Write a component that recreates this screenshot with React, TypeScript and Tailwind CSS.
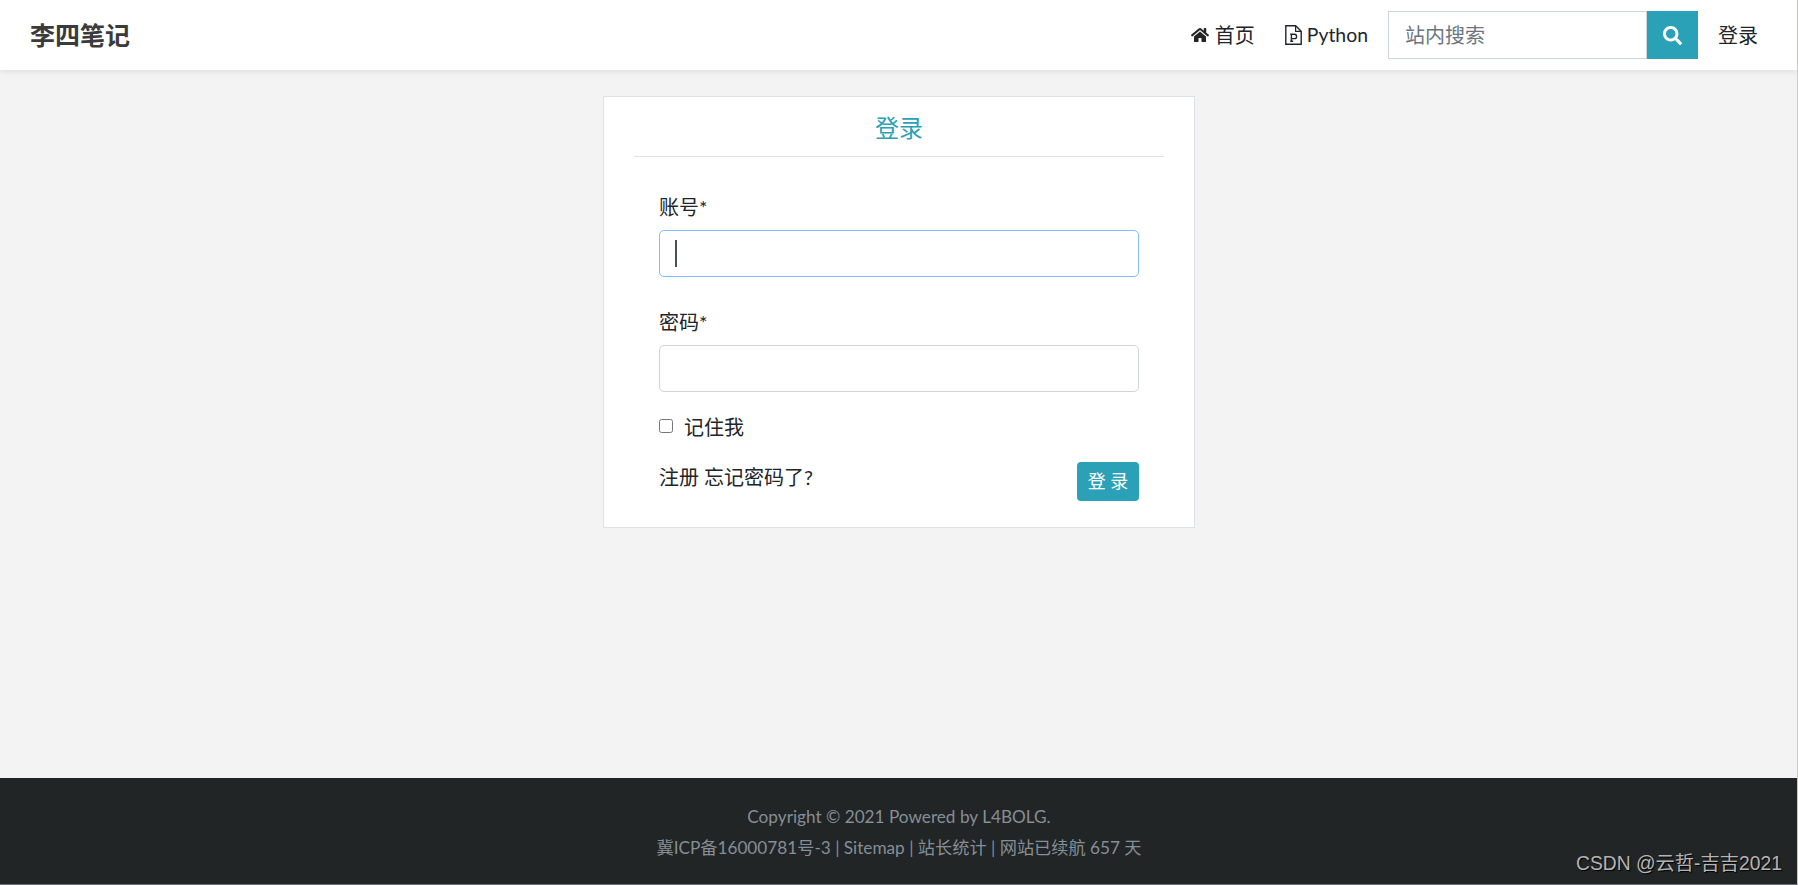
import { FaHome, FaSearch } from "react-icons/fa";

function FileP() {
  return (
    <svg viewBox="0 0 17 20" className="h-[20px] w-[17px] shrink-0" fill="none" stroke="currentColor">
      <path d="M1.5.8h9.2l5.5 5.5v12.9H.8V.8z" strokeWidth="1.4" />
      <path d="M10.6 1v5.4H16" strokeWidth="1.2" />
      <path d="M5.2 9.2h1.4M5.2 16.2h3M6.4 9.2v7M6.4 9.2h3a2 2 0 0 1 0 4.4h-3" strokeWidth="1.4" />
    </svg>
  );
}

export default function App() {
  return (
    <div className="relative flex h-[885px] flex-col overflow-hidden bg-[#f3f3f3] font-['Lato','Noto_Sans_CJK_SC',sans-serif] text-[20px] text-[#212529]">
      <header className="flex h-[70px] shrink-0 items-center justify-between bg-white pl-[30px] pr-[40px] shadow-[0_1px_6px_rgba(0,0,0,0.1)]">
        <a className="pt-[1px] text-[25px] font-bold text-[#3b3b3b]">李四笔记</a>
        <nav className="flex items-center">
          <a className="flex items-center gap-[6px]">
            <FaHome className="h-[18px] w-[18px]" />
            首页
          </a>
          <a className="ml-[30px] flex items-center gap-[5px] text-[19.4px]">
            <FileP />
            Python
          </a>
          <form className="ml-[20px] flex h-[48px] items-stretch">
            <div className="flex w-[259px] items-center border border-[#ced4da] bg-white pl-[16px] text-[#6c757d]">
              站内搜索
            </div>
            <button type="button" className="flex w-[51px] items-center justify-center bg-[#2ba1b8] text-white">
              <FaSearch className="h-[19px] w-[19px]" />
            </button>
          </form>
          <a className="ml-[20px]">登录</a>
        </nav>
      </header>

      <main className="flex-1">
        <section className="mx-auto mt-[26px] h-[432px] w-[592px] border border-[#dee2e6] bg-white px-[30px]">
          <h2 className="flex h-[60px] items-center justify-center border-b border-[#dee2e6] pt-[2px] text-[24px] text-[#2ba1b8]">
            登录
          </h2>
          <form className="px-[25px]">
            <label className="mt-[37px] block leading-[27px]">账号*</label>
            <div className="mt-[9px] flex h-[47px] items-center rounded-[5px] border border-[#80bdff] bg-white pl-[15px]">
              <span className="h-[27px] w-[2px] bg-[#495057]" />
            </div>
            <label className="mt-[32px] block leading-[27px]">密码*</label>
            <div className="mt-[9px] h-[47px] rounded-[5px] border border-[#ced4da] bg-white" />
            <div className="mt-[22px] flex items-center">
              <input type="checkbox" className="mb-[4px] h-[14px] w-[14px]" />
              <span className="ml-[11px] leading-[27px]">记住我</span>
            </div>
            <div className="mt-[21px] flex items-start justify-between">
              <span className="mt-[2px] leading-[27px]">注册 忘记密码了?</span>
              <button
                type="button"
                className="h-[39px] w-[62px] rounded-[4px] bg-[#2ba1b8] text-[18px] text-white"
              >
                登 录
              </button>
            </div>
          </form>
        </section>
      </main>

      <footer className="flex h-[107px] shrink-0 flex-col items-center bg-[#212526] pt-[23px] text-[17.2px] leading-[31px] text-[#868e96]">
        <p>Copyright © 2021 Powered by L4BOLG.</p>
        <p>冀ICP备16000781号-3 | Sitemap | 站长统计 | 网站已续航 657 天</p>
      </footer>

      <div className="absolute bottom-[6px] right-[16px] font-['Liberation_Sans','Noto_Sans_CJK_SC',sans-serif] text-[19.3px] text-[#b5b5b5] [text-shadow:1px_1px_1px_#000]">
        CSDN @云哲-吉吉2021
      </div>
      <div className="absolute inset-0 border-r border-b border-r-[#cfc8bb] border-b-[#6f6f80]" />
    </div>
  );
}
